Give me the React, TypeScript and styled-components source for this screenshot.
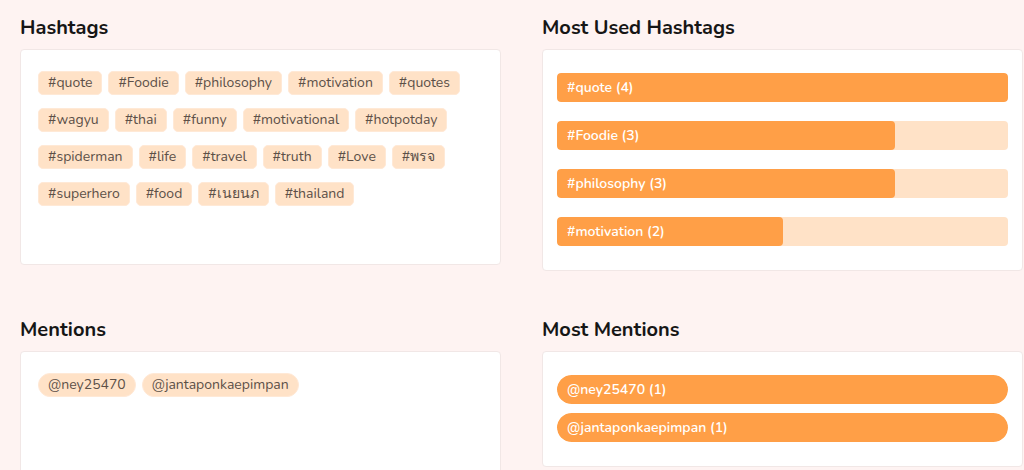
import styled, { createGlobalStyle } from "styled-components";

const GlobalStyle = createGlobalStyle`
  * {
    box-sizing: border-box;
  }
  body {
    margin: 0;
    background: #fef3f2;
    font-family: Nunito, Lato, "Noto Sans", sans-serif;
  }
`;

const hashtags = [
  "#quote",
  "#Foodie",
  "#philosophy",
  "#motivation",
  "#quotes",
  "#wagyu",
  "#thai",
  "#funny",
  "#motivational",
  "#hotpotday",
  "#spiderman",
  "#life",
  "#travel",
  "#truth",
  "#Love",
  "#พรจ",
  "#superhero",
  "#food",
  "#เนยนภ",
  "#thailand",
];

const mentions = ["@ney25470", "@jantaponkaepimpan"];

const topHashtags = [
  { tag: "#quote", count: 4 },
  { tag: "#Foodie", count: 3 },
  { tag: "#philosophy", count: 3 },
  { tag: "#motivation", count: 2 },
];

const topMentions = [
  { tag: "@ney25470", count: 1 },
  { tag: "@jantaponkaepimpan", count: 1 },
];

const App = () => {
  const maxTag = Math.max(...topHashtags.map((h) => h.count));
  const maxMention = Math.max(...topMentions.map((m) => m.count));

  return (
    <>
      <GlobalStyle />
      <StyledPage>
        <StyledSection>
          <StyledTitle>Hashtags</StyledTitle>
          <StyledChipCard>
            <StyledChipList>
              {hashtags.map((tag) => (
                <StyledChip key={tag}>{tag}</StyledChip>
              ))}
            </StyledChipList>
          </StyledChipCard>
        </StyledSection>

        <StyledSection>
          <StyledTitle>Most Used Hashtags</StyledTitle>
          <StyledBarCard>
            <StyledBarList $gap={19}>
              {topHashtags.map((item) => (
                <StyledTrack key={item.tag}>
                  <StyledFill style={{ width: `${(item.count / maxTag) * 100}%` }} />
                  <StyledBarLabel>
                    {item.tag} ({item.count})
                  </StyledBarLabel>
                </StyledTrack>
              ))}
            </StyledBarList>
          </StyledBarCard>
        </StyledSection>

        <StyledSection>
          <StyledTitle>Mentions</StyledTitle>
          <StyledChipCard>
            <StyledChipList>
              {mentions.map((m) => (
                <StyledChip key={m} $pill>
                  {m}
                </StyledChip>
              ))}
            </StyledChipList>
          </StyledChipCard>
        </StyledSection>

        <StyledSection>
          <StyledTitle>Most Mentions</StyledTitle>
          <StyledBarCard>
            <StyledBarList $gap={9}>
              {topMentions.map((item) => (
                <StyledTrack key={item.tag} $pill>
                  <StyledFill
                    $pill
                    style={{ width: `${(item.count / maxMention) * 100}%` }}
                  />
                  <StyledBarLabel>
                    {item.tag} ({item.count})
                  </StyledBarLabel>
                </StyledTrack>
              ))}
            </StyledBarList>
          </StyledBarCard>
        </StyledSection>
      </StyledPage>
    </>
  );
};

export default App;

const StyledPage = styled.div`
  display: grid;
  grid-template-columns: 481px 481px;
  column-gap: 41px;
  row-gap: 45px;
  align-items: start;
  padding: 14px 0 0 20px;
`;

const StyledSection = styled.section`
  display: flex;
  flex-direction: column;
`;

const StyledTitle = styled.h2`
  margin: 0 0 7px;
  color: #161616;
  font-size: 20px;
  font-weight: 700;
  line-height: 28px;
`;

const StyledCard = styled.div`
  background: #fff;
  border: 1px solid #f1e7e6;
  border-radius: 4px;
`;

const StyledChipCard = styled(StyledCard)`
  min-height: 216px;
  padding: 21px 17px;
`;

const StyledBarCard = styled(StyledCard)`
  padding: 23px 14px 24px;
`;

const StyledChipList = styled.div`
  display: flex;
  flex-wrap: wrap;
  column-gap: 6px;
  row-gap: 13px;
`;

const StyledChip = styled.span<{ $pill?: boolean }>`
  display: inline-flex;
  align-items: center;
  height: 24px;
  padding: 0 9px;
  background: #ffe2c7;
  border: 1px solid #ffe9d6;
  border-radius: ${({ $pill }) => ($pill ? "12px" : "5px")};
  color: #5c5047;
  font-size: 14px;
  line-height: 1;
  white-space: nowrap;
`;

const StyledBarList = styled.div<{ $gap: number }>`
  display: flex;
  flex-direction: column;
  gap: ${({ $gap }) => $gap}px;
`;

const StyledTrack = styled.div<{ $pill?: boolean }>`
  position: relative;
  height: 29px;
  background: #ffe2c7;
  border-radius: ${({ $pill }) => ($pill ? "15px" : "4px")};
  overflow: hidden;
`;

const StyledFill = styled.div<{ $pill?: boolean }>`
  height: 100%;
  background: #ff9f47;
  border-radius: ${({ $pill }) => ($pill ? "15px" : "4px")};
`;

const StyledBarLabel = styled.span`
  position: absolute;
  left: 10px;
  top: 0;
  bottom: 0;
  display: flex;
  align-items: center;
  color: #fff;
  font-size: 14px;
  font-weight: 600;
  white-space: nowrap;
`;
